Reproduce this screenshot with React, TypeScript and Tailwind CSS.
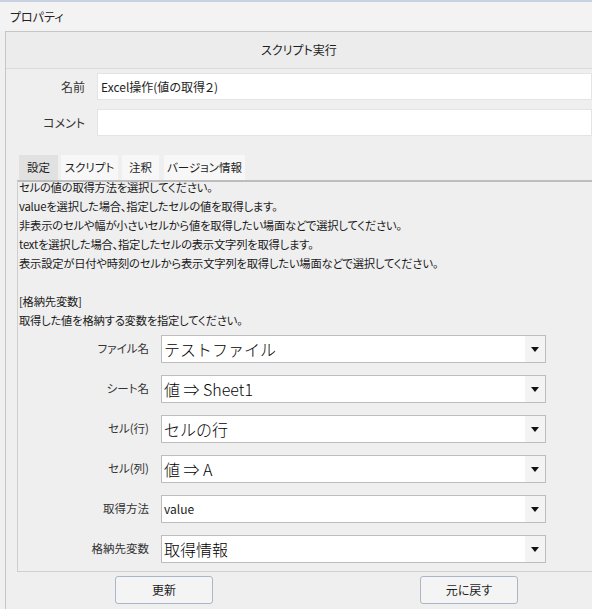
import React from "react";

const helpLines = [
  "セルの値の取得方法を選択してください。",
  "valueを選択した場合、指定したセルの値を取得します。",
  "非表示のセルや幅が小さいセルから値を取得したい場面などで選択してください。",
  "textを選択した場合、指定したセルの表示文字列を取得します。",
  "表示設定が日付や時刻のセルから表示文字列を取得したい場面などで選択してください。",
  "",
  "[格納先変数]",
  "取得した値を格納する変数を指定してください。",
];

const fields: { label: string; value: string; small?: boolean }[] = [
  { label: "ファイル名", value: "テストファイル" },
  { label: "シート名", value: "値 ⇒ Sheet1" },
  { label: "セル(行)", value: "セルの行" },
  { label: "セル(列)", value: "値 ⇒ A" },
  { label: "取得方法", value: "value", small: true },
  { label: "格納先変数", value: "取得情報" },
];

const tabs = [
  { t: "設定", w: "w-[39px] mr-[3px] bg-[#e1e1e1]" },
  { t: "スクリプト", w: "w-[57px] mr-[4px] bg-[#f7f7f7]" },
  { t: "注釈", w: "w-[37px] mr-[5px] bg-[#f7f7f7]" },
  { t: "バージョン情報", w: "w-[81px] bg-[#f7f7f7]" },
];

function SelectBox({ value, small }: { value: string; small?: boolean }) {
  return (
    <div className="flex h-[28px] w-[385px] border border-[#bdbdbd] bg-white">
      <div
        className={
          small
            ? "flex flex-1 items-center pl-[2px] text-[12px] text-[#1a1a1a]"
            : "flex flex-1 items-center whitespace-pre pl-[2px] font-['Noto_Sans_CJK_JP',sans-serif] text-[16px] font-light text-black [font-feature-settings:normal]"
        }
      >
        {value}
      </div>
      <div className="flex w-[20px] items-center justify-center bg-[#f3f3f3]">
        <svg width="8" height="5" viewBox="0 0 8 5">
          <path d="M0 0h8L4 5z" fill="#111" />
        </svg>
      </div>
    </div>
  );
}

export default function App() {
  return (
    <div className="flex h-[609px] w-[592px] flex-col overflow-hidden bg-[#f0f0f0] font-['Noto_Sans_CJK_JP',sans-serif] text-[12px] text-[#1e1e1e] [font-feature-settings:'palt']">
      <div className="h-[2px] bg-[#c8d1e1]" />
      <div className="flex h-[29px] items-center bg-[#f3f3f3] px-[10px] text-[12px] text-[#222]">
        プロパティ
      </div>

      <div className="ml-[5px] flex flex-1 flex-col border-l border-t border-[#c6c6c6] bg-[#efefef]">
        <div className="flex h-[37px] items-center justify-center border-b border-[#dadada] bg-[#ececec] text-[12px]">
          スクリプト実行
        </div>

        <div className="mt-[4px] flex items-center">
          <div className="w-[79px] text-right text-[#333]">名前</div>
          <div className="ml-[12px] flex h-[27px] flex-1 items-center border border-[#e4e4e4] bg-white pl-[3px]">
            Excel操作(値の取得２)
          </div>
        </div>
        <div className="mt-[9px] flex items-center">
          <div className="w-[79px] text-right text-[#333]">コメント</div>
          <div className="ml-[12px] h-[27px] flex-1 border border-[#e4e4e4] bg-white" />
        </div>

        <div className="mt-[19px] flex pl-[13px] text-[11.5px]">
          {tabs.map((t) => (
            <div key={t.t} className={`flex h-[25px] items-center justify-center ${t.w}`}>
              {t.t}
            </div>
          ))}
        </div>

        <div className="ml-[11px] flex h-[392px] flex-col overflow-hidden border-b border-l border-t-2 border-[#cfcfcf] border-t-[#bdbdbd]">
          <div className="-mt-[4px] pl-[1px] text-[11.3px] tracking-[-0.2px] text-[#1a1a1a]">
            {helpLines.map((l, i) => (
              <div key={i} className="h-[19px] whitespace-nowrap leading-[19px]">
                {l}
              </div>
            ))}
          </div>
          <div className="mt-[5px] flex flex-col gap-[12px]">
            {fields.map((f) => (
              <div key={f.label} className="flex items-center">
                <div className="w-[131px] text-right text-[11.5px] text-[#333]">{f.label}</div>
                <div className="ml-[12px]">
                  <SelectBox value={f.value} small={f.small} />
                </div>
              </div>
            ))}
          </div>
        </div>

        <div className="mt-[4px] flex">
          <button className="ml-[109px] flex h-[28px] w-[98px] items-center justify-center rounded-[3px] border border-[#a9b7c8] bg-[#f4f4f4] text-[12px]">
            更新
          </button>
          <button className="ml-[207px] flex h-[28px] w-[98px] items-center justify-center rounded-[3px] border border-[#a9b7c8] bg-[#f4f4f4] text-[12px]">
            元に戻す
          </button>
        </div>
      </div>
    </div>
  );
}
